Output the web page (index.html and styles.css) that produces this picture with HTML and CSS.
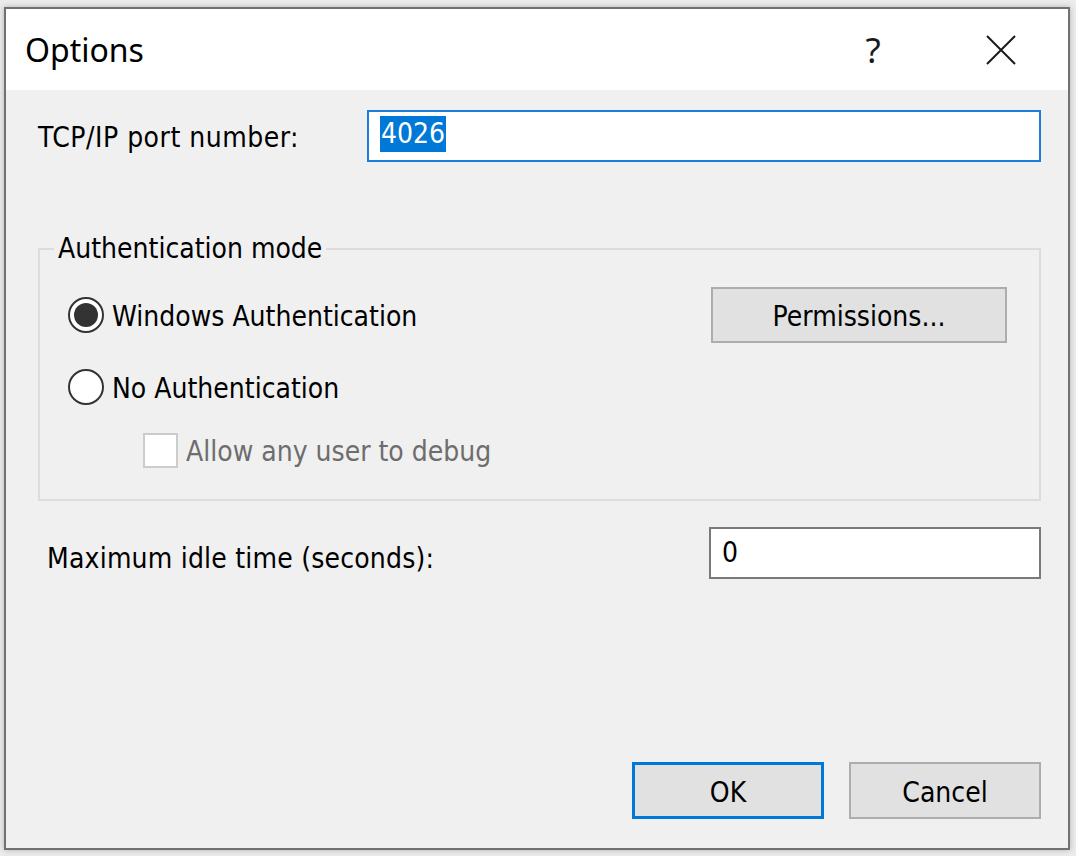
FILE: index.html
```html
<!DOCTYPE html>
<html lang="en">
<head>
<meta charset="utf-8">
<title>Options</title>
<link rel="stylesheet" href="styles.css">
</head>
<body>
<div class="window">
  <header class="titlebar">
    <span class="title">Options</span>
    <div class="caption-buttons">
      <span class="cap-btn cap-help">?</span>
      <span class="cap-btn cap-close">
        <svg width="30" height="30" viewBox="0 0 30 30" aria-hidden="true">
          <path d="M1 1 L29 29 M29 1 L1 29" stroke="#1a1a1a" stroke-width="2" fill="none"/>
        </svg>
      </span>
    </div>
  </header>
  <main class="content">
    <div class="field-row">
      <span class="field-label">TCP/IP port number:</span>
      <div class="textbox textbox--focused"><span class="selection">4026</span></div>
    </div>
    <fieldset class="group">
      <legend class="group-title">Authentication mode</legend>
      <div class="group-row">
        <span class="option"><span class="radio radio--checked"></span><span>Windows Authentication</span></span>
        <button class="btn btn--wide" type="button">Permissions...</button>
      </div>
      <div class="group-row group-row--second">
        <span class="option"><span class="radio"></span><span>No Authentication</span></span>
      </div>
      <div class="group-row group-row--sub">
        <span class="option option--disabled"><span class="checkbox"></span><span>Allow any user to debug</span></span>
      </div>
    </fieldset>
    <div class="idle-row">
      <span class="idle-label">Maximum idle time (seconds):</span>
      <div class="textbox textbox--idle">0</div>
    </div>
    <div class="actions">
      <button class="btn btn--default" type="button">OK</button>
      <button class="btn" type="button">Cancel</button>
    </div>
  </main>
</div>
</body>
</html>
```

FILE: styles.css
```css
html, body {
  margin: 0;
  height: 100%;
}

body {
  background: #ececec;
  font-family: "DejaVu Sans Condensed", "DejaVu Sans", sans-serif;
  font-stretch: condensed;
  font-size: 28px;
  color: #000;
  overflow: hidden;
}

.window {
  box-sizing: border-box;
  width: 1066px;
  height: 843px;
  margin: 7px 0 0 4px;
  border: 2px solid #717171;
  background: #f0f0f0;
  display: flex;
  flex-direction: column;
  box-shadow: 0 0 6px rgba(0, 0, 0, 0.25);
}

.titlebar {
  flex: none;
  height: 81px;
  background: #fff;
  display: flex;
  align-items: center;
}

.title {
  flex: 1;
  font-family: "Noto Sans", sans-serif;
  font-stretch: normal;
  font-size: 32px;
  padding-left: 19px;
}

.caption-buttons {
  align-self: stretch;
  display: flex;
  margin-right: 6px;
}

.cap-btn {
  display: flex;
  align-items: center;
  justify-content: center;
}

.cap-help {
  width: 134px;
  font-family: "Noto Sans", sans-serif;
  font-stretch: normal;
  font-size: 35px;
  color: #1a1a1a;
}

.cap-close {
  width: 122px;
}

.content {
  flex: 1;
  display: flex;
  flex-direction: column;
  padding: 20px 27px 29px 32px;
}

.field-row {
  display: flex;
  align-items: center;
  height: 52px;
}

.field-label {
  flex: none;
  width: 329px;
  padding-top: 3px;
  letter-spacing: 0.5px;
}

.textbox {
  box-sizing: border-box;
  height: 52px;
  border: 2px solid #7a7a7a;
  background: #fff;
  display: flex;
  align-items: center;
  padding: 0 11px;
  line-height: 36px;
}

.textbox--focused {
  flex: 1;
  border-color: #1a7fd8;
  padding-bottom: 4px;
}

.selection {
  background: #0078d7;
  color: #fff;
  padding: 0 1px;
}

.group {
  margin: 72px 0 0;
  padding: 23px 32px 21px 28px;
  border: 2px solid #dcdcdc;
  min-width: 0;
}

.group-title {
  margin-left: -14px;
  padding: 0 4px;
  line-height: 30px;
}

.group-row {
  display: flex;
  align-items: center;
  justify-content: space-between;
  height: 56px;
}

.group-row--second {
  margin-top: 16px;
}

.group-row--sub {
  margin-top: 7px;
  padding-left: 75px;
}

.option {
  display: flex;
  align-items: center;
  gap: 8px;
}

.option > span:last-child {
  padding-top: 3px;
}

.option--disabled {
  color: #6d6d6d;
}

.radio {
  box-sizing: border-box;
  flex: none;
  width: 36px;
  height: 36px;
  border: 2px solid #333;
  border-radius: 50%;
  background: #fff;
  display: flex;
  align-items: center;
  justify-content: center;
}

.radio--checked::after {
  content: "";
  width: 24px;
  height: 24px;
  border-radius: 50%;
  background: #333;
}

.checkbox {
  box-sizing: border-box;
  flex: none;
  width: 35px;
  height: 35px;
  border: 2px solid #cccccc;
  background: #fff;
}

.idle-row {
  display: flex;
  justify-content: space-between;
  align-items: flex-start;
  margin-top: 26px;
}

.idle-label {
  padding-left: 9px;
  margin-top: 14px;
  line-height: 36px;
  letter-spacing: 0.2px;
}

.textbox--idle {
  width: 332px;
}

.actions {
  margin-top: auto;
  display: flex;
  justify-content: flex-end;
  gap: 25px;
}

.btn {
  box-sizing: border-box;
  width: 192px;
  height: 57px;
  margin: 0;
  padding: 3px 0 0;
  background: #e1e1e1;
  border: 2px solid #adadad;
  font-family: inherit;
  font-size: inherit;
  font-stretch: inherit;
  color: #000;
}

.btn--wide {
  width: 296px;
  height: 56px;
}

.btn--default {
  border: 3px solid #0078d7;
}
```
